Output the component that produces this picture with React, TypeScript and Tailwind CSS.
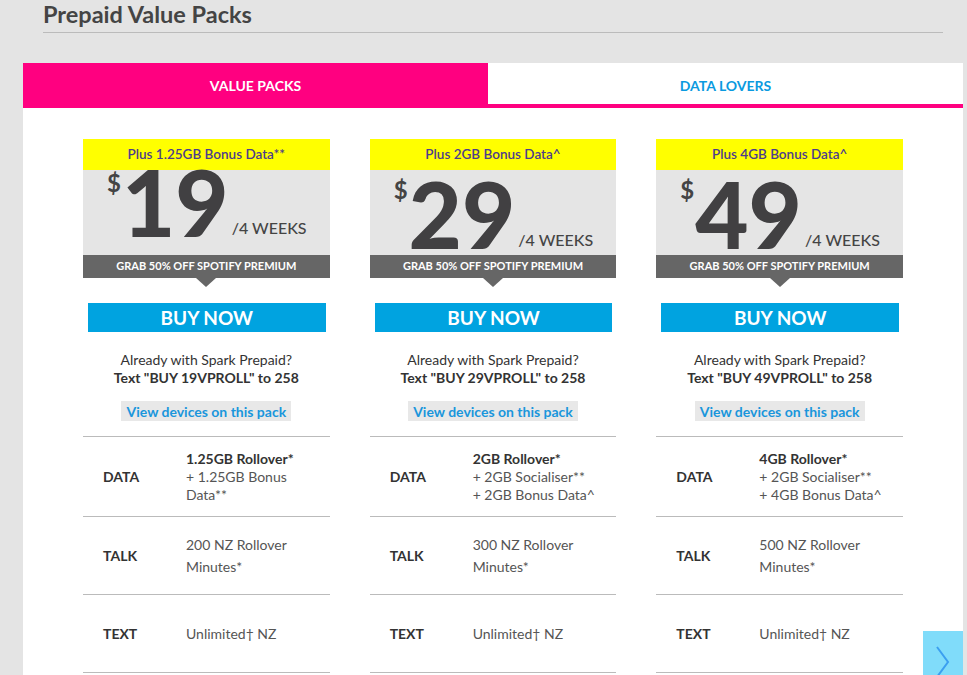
import React from 'react';

interface Pack {
  bonus: string;
  price: string;
  code: string;
  dataMain: string;
  dataExtra: string[];
  talk: string;
  lift?: boolean;
}

const packs: Pack[] = [
  {
    bonus: 'Plus 1.25GB Bonus Data**',
    price: '19',
    code: '19VPROLL',
    dataMain: '1.25GB Rollover*',
    dataExtra: ['+ 1.25GB Bonus Data**'],
    talk: '200 NZ Rollover Minutes*',
    lift: true,
  },
  {
    bonus: 'Plus 2GB Bonus Data^',
    price: '29',
    code: '29VPROLL',
    dataMain: '2GB Rollover*',
    dataExtra: ['+ 2GB Socialiser**', '+ 2GB Bonus Data^'],
    talk: '300 NZ Rollover Minutes*',
  },
  {
    bonus: 'Plus 4GB Bonus Data^',
    price: '49',
    code: '49VPROLL',
    dataMain: '4GB Rollover*',
    dataExtra: ['+ 2GB Socialiser**', '+ 4GB Bonus Data^'],
    talk: '500 NZ Rollover Minutes*',
  },
];

function PackCard({ pack }: { pack: Pack }) {
  return (
    <div className="flex flex-col">
      <div className="h-[31px] bg-[#ffff00] flex items-center justify-center text-[13.5px] font-semibold text-[#4d3c8c]">
        {pack.bonus}
      </div>
      <div className="h-[85px] bg-[#e5e5e5] flex items-start pl-[24px]">
        <span
          className={`text-[24px] font-bold leading-none text-[#444] ${
            pack.lift ? 'mt-[1px]' : 'mt-[8px]'
          }`}
        >
          $
        </span>
        <span
          className={`text-[92px] font-black leading-[64px] text-[#414042] ml-[1px] ${
            pack.lift ? 'mt-0' : 'mt-[12px]'
          }`}
        >
          {pack.price}
        </span>
        <span
          className={`self-end text-[16px] font-medium leading-none text-[#444] ml-[3px] ${
            pack.lift ? 'mb-[19px]' : 'mb-[7px]'
          }`}
        >
          /4 WEEKS
        </span>
      </div>
      <div className="h-[23px] bg-[#666666] flex items-center justify-center text-[11px] font-bold text-white">
        GRAB 50% OFF SPOTIFY PREMIUM
      </div>
      <div className="flex justify-center">
        <div className="w-0 h-0 border-l-[10px] border-r-[10px] border-t-[9px] border-l-transparent border-r-transparent border-t-[#666666]" />
      </div>
      <button className="mt-[16px] ml-[5px] mr-[4px] h-[29px] bg-[#00a3e0] text-white text-[19px] font-bold leading-none">
        BUY NOW
      </button>
      <div className="mt-[19px] text-center text-[14px] leading-[18px] text-[#333]">
        <div>Already with Spark Prepaid?</div>
        <div className="font-bold">Text "BUY {pack.code}" to 258</div>
      </div>
      <div className="mt-[14px] flex justify-center">
        <span className="bg-[#e8e8e8] px-[5px] h-[20px] flex items-center text-[14px] font-bold text-[#1a96dc]">
          View devices on this pack
        </span>
      </div>
      <div className="mt-[15px] border-t border-[#bbbbbb]">
        <div className="h-[80px] flex items-center border-b border-[#bbbbbb]">
          <div className="w-[103px] pl-[20px] text-[14px] font-bold text-[#333]">DATA</div>
          <div className="w-[128px] text-[14px] leading-[18px] text-[#555]">
            <div className="font-bold text-[#333]">{pack.dataMain}</div>
            {pack.dataExtra.map(line => (
              <div key={line}>{line}</div>
            ))}
          </div>
        </div>
        <div className="h-[78px] flex items-center border-b border-[#bbbbbb]">
          <div className="w-[103px] pl-[20px] text-[14px] font-bold text-[#333]">TALK</div>
          <div className="w-[128px] text-[14px] leading-[22px] text-[#555]">{pack.talk}</div>
        </div>
        <div className="h-[78px] flex items-center border-b border-[#bbbbbb]">
          <div className="w-[103px] pl-[20px] text-[14px] font-bold text-[#333]">TEXT</div>
          <div className="w-[128px] text-[14px] leading-[22px] text-[#555]">Unlimited† NZ</div>
        </div>
      </div>
    </div>
  );
}

export default function App() {
  return (
    <div
      className="relative w-[967px] h-[675px] overflow-hidden bg-[#e4e4e4]"
      style={{ fontFamily: 'Lato, "Noto Sans", sans-serif' }}
    >
      <div className="ml-[43px] w-[900px] border-b border-[#bbbbbb] pb-[4px]">
        <h1 className="text-[23.5px] font-bold leading-[28px] text-[#444]">
          Prepaid Value Packs
        </h1>
      </div>
      <div className="mt-[30px] ml-[23px] w-[940px] bg-white h-[700px]">
        <div className="flex h-[45px]">
          <div className="w-[465px] bg-[#ff0080] flex items-center justify-center text-[14px] font-bold text-white">
            VALUE PACKS
          </div>
          <div className="flex-1 border-b-4 border-[#ff0080] flex items-center justify-center pt-[4px] text-[14px] font-bold text-[#0a9ae0]">
            DATA LOVERS
          </div>
        </div>
        <div className="px-[60px] pt-[31px] grid grid-cols-3 gap-[40px]">
          {packs.map(pack => (
            <PackCard key={pack.price} pack={pack} />
          ))}
        </div>
      </div>
      <div className="absolute left-[923px] top-[631px] w-[40px] h-[50px] bg-[#80dcfa]">
        <svg className="absolute left-[12px] top-[14px]" width="16" height="36" viewBox="0 0 16 36" fill="none">
          <path d="M2 2 L13 17 L2 32" stroke="#3b9ff0" strokeWidth="2" />
        </svg>
      </div>
    </div>
  );
}
